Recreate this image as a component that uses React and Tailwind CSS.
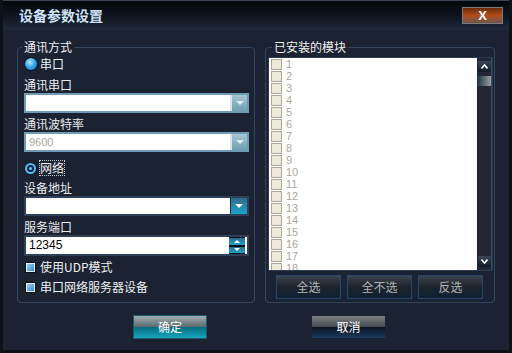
import React from 'react';

const cjk = { fontFamily: '"Noto Sans CJK SC", "Liberation Sans", sans-serif' };

function Radio({ label, variant, focus }) {
  return (
    <div className="h-[16px] flex items-center gap-[3px] pl-[1px]">
      {variant === 'solid' ? (
        <span className="w-[12px] h-[12px] rounded-full bg-[radial-gradient(circle_at_40%_35%,#bfe6ff_0%,#37a8f4_45%,#0b62b8_100%)] shadow-[0_0_0_1px_#0a1a2a]" />
      ) : (
        <span className="w-[11px] h-[11px] rounded-full bg-[#5bb8f0] flex items-center justify-center shadow-[0_0_0_1px_#0a1a2a]">
          <span className="w-[7px] h-[7px] rounded-full bg-[#0e2a48] flex items-center justify-center">
            <span className="w-[3px] h-[3px] rounded-full bg-[#6cc8ff]" />
          </span>
        </span>
      )}
      <span className={focus ? 'text-[12px] leading-[14px] text-[#f0f0f0] border border-dotted border-[#c8c8c8]' : 'text-[12px] leading-[14px] text-[#f0f0f0]'}>
        {label}
      </span>
    </div>
  );
}

function Check({ label, className }) {
  return (
    <div className={`h-[16px] flex items-center gap-[4px] pl-[1px] ${className}`}>
      <span className="w-[11px] h-[11px] border border-[#0a0f18] bg-[#e8f2fa] p-[1px]">
        <span className="block w-full h-full bg-linear-to-br from-[#9ad2f6] to-[#2c8ad8]" />
      </span>
      <span className="text-[12px] text-[#f0f0f0]">{label}</span>
    </div>
  );
}

function Combo({ value, dark }) {
  return (
    <div className={dark ? 'h-[20px] flex border-2 border-[#2e4158] bg-white' : 'h-[20px] flex border-2 border-[#6f9bb5] bg-white'}>
      <div className="flex-1 text-[11px] leading-[16px] pl-[3px] text-[#a8a8a0]" style={{ fontFamily: '"Liberation Sans", sans-serif' }}>
        {value}
      </div>
      {dark ? (
        <div className="w-[17px] bg-linear-to-b from-[#2b6a88] to-[#1aa4cc] border-l border-[#16324a] flex items-center justify-center">
          <span className="w-0 h-0 border-x-[4px] border-x-transparent border-t-[4px] border-t-white" />
        </div>
      ) : (
        <div className="w-[17px] bg-linear-to-b from-[#a9c6d2] to-[#6f9fb0] border-l-2 border-[#d8e4ea] flex items-center justify-center">
          <span className="w-0 h-0 border-x-[4px] border-x-transparent border-t-[4px] border-t-[#e4eef2]" />
        </div>
      )}
    </div>
  );
}

function ListButton({ children }) {
  return (
    <button className="w-[65px] h-[24px] border border-[#27486c] bg-linear-to-b from-[#3e444c] via-[#1c232c] to-[#0f2233] text-[12px] text-[#b4b4b4]">
      {children}
    </button>
  );
}

export default function App() {
  const items = Array.from({ length: 18 }, (_, i) => i + 1);
  return (
    <div className="w-[512px] h-[353px] flex flex-col bg-[#1b2231] border-x-[3px] border-b-[3px] border-[#0c1017] overflow-hidden" style={cjk}>
      {/* title bar */}
      <div className="h-[30px] shrink-0 flex items-center justify-between pl-[16px] pr-[6px] bg-linear-to-b from-[#04070b] via-[#0e141e] to-[#1f2a3a] border-t border-[#3a4454]">
        <span className="text-[14px] font-bold text-[#cfe3f8]">设备参数设置</span>
        <button className="w-[41px] h-[17px] border border-[#7c7c7c] bg-linear-to-b from-[#6a2a0c] via-[#b24c1a] to-[#6b5648] flex items-center justify-center text-white font-bold text-[13px] leading-none" style={{ fontFamily: '"Liberation Sans", sans-serif' }}>
          X
        </button>
      </div>

      <div className="flex pl-[14px] pt-[9px] gap-[10px]">
        {/* left group */}
        <fieldset className="w-[238px] h-[264px] border border-[#33455c] rounded-[4px] pl-[6px] pr-[5px]">
          <legend className="-ml-[2px] px-[2px] text-[12px] leading-[16px] text-[#f0f0f0]">通讯方式</legend>
          <div className="flex flex-col mt-[1px]">
            <Radio label="串口" variant="solid" />
            <div className="h-[16px] leading-[16px] text-[12px] text-[#ececec] mt-[5px]">通讯串口</div>
            <Combo value="" />
            <div className="h-[16px] leading-[16px] text-[12px] text-[#ececec] mt-[3px]">通讯波特率</div>
            <Combo value="9600" />
            <div className="mt-[8px]">
              <Radio label="网络" variant="ring" focus />
            </div>
            <div className="h-[16px] leading-[16px] text-[12px] text-[#ececec] mt-[4px]">设备地址</div>
            <Combo value="" dark />
            <div className="h-[16px] leading-[16px] text-[12px] text-[#ececec] mt-[3px]">服务端口</div>
            <div className="h-[21px] flex border-2 border-[#2e4158] bg-white">
              <div className="flex-1 text-[12px] leading-[17px] pl-[3px] text-black" style={{ fontFamily: '"Liberation Sans", sans-serif' }}>12345</div>
              <div className="w-[16px] flex flex-col bg-[#0a0f16] gap-[2px] py-[1px] mr-[2px]">
                <div className="flex-1 bg-linear-to-b from-[#2b6a88] to-[#1aa4cc] flex items-center justify-center">
                  <span className="w-0 h-0 border-x-[3px] border-x-transparent border-b-[3px] border-b-white" />
                </div>
                <div className="flex-1 bg-linear-to-b from-[#2b6a88] to-[#1aa4cc] flex items-center justify-center">
                  <span className="w-0 h-0 border-x-[3px] border-x-transparent border-t-[3px] border-t-white" />
                </div>
              </div>
            </div>
            <Check label="使用UDP模式" className="mt-[3px]" />
            <Check label="串口网络服务器设备" className="mt-[4px]" />
          </div>
        </fieldset>

        {/* right group */}
        <fieldset className="w-[230px] h-[264px] border border-[#33455c] rounded-[4px] pl-[2px] pr-[1px]">
          <legend className="ml-[4px] px-[2px] text-[12px] leading-[16px] text-[#f0f0f0]">已安装的模块</legend>
          <div className="flex h-[214px] mt-[2px] border border-[#2a3a50] bg-[#222637]">
            <div className="w-[208px] bg-white overflow-hidden">
              {items.map((n) => (
                <div key={n} className="h-[12px] flex items-center gap-[4px] pl-[2px]">
                  <span className="w-[11px] h-[11px] shrink-0 bg-[#ece9d8] border border-[#aca899]" />
                  <span className="text-[11px] leading-[12px] text-[#aca899]" style={{ fontFamily: '"Liberation Sans", sans-serif' }}>{n}</span>
                </div>
              ))}
            </div>
            <div className="flex-1 flex flex-col items-center pt-[3px] pb-[3px] border-r border-[#3a4a64]">
              <div className="w-[13px] h-[11px] bg-linear-to-b from-[#3a4656] to-[#101c2a] flex items-center justify-center">
                <svg width="7" height="5" viewBox="0 0 7 5"><path d="M0.5 4.5 L3.5 1 L6.5 4.5" stroke="white" strokeWidth="1.6" fill="none" /></svg>
              </div>
              <div className="w-[14px] h-[10px] mt-[4px] bg-linear-to-r from-[#1a3048] via-[#5a6870] to-[#9aa2a4]" />
              <div className="flex-1" />
              <div className="w-[13px] h-[11px] bg-linear-to-b from-[#3a4656] to-[#101c2a] flex items-center justify-center">
                <svg width="7" height="5" viewBox="0 0 7 5"><path d="M0.5 0.5 L3.5 4 L6.5 0.5" stroke="white" strokeWidth="1.6" fill="none" /></svg>
              </div>
            </div>
          </div>
          <div className="flex gap-[6px] pl-[8px] mt-[4px]">
            <ListButton>全选</ListButton>
            <ListButton>全不选</ListButton>
            <ListButton>反选</ListButton>
          </div>
        </fieldset>
      </div>

      {/* bottom buttons */}
      <div className="flex items-center pl-[130px] gap-[105px] mt-[12px]">
        <button className="w-[74px] h-[24px] border border-[#1c5a6a] flex flex-col text-[12px] text-white relative overflow-hidden">
          <span className="h-1/2 w-full bg-linear-to-b from-[#a0acb0] to-[#5c6a70]" />
          <span className="h-1/2 w-full bg-linear-to-b from-[#086a80] to-[#14a8c0]" />
          <span className="absolute inset-0 flex items-center justify-center">确定</span>
        </button>
        <button className="w-[73px] h-[22px] flex flex-col text-[12px] text-white relative overflow-hidden">
          <span className="h-1/2 w-full bg-linear-to-b from-[#7a8084] to-[#444a50]" />
          <span className="h-1/2 w-full bg-linear-to-b from-[#0a1424] to-[#1c3c60]" />
          <span className="absolute inset-0 flex items-center justify-center">取消</span>
        </button>
      </div>
    </div>
  );
}
